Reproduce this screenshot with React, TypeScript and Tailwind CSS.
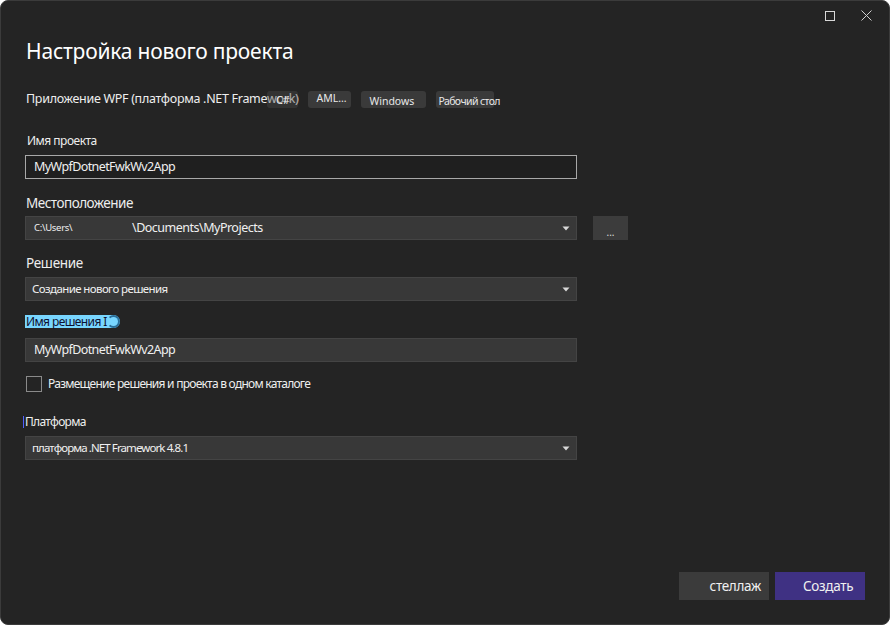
import React from "react";

const font = { fontFamily: '"Noto Sans", "Open Sans", sans-serif' };

function Chevron() {
  return (
    <svg width="8" height="5" viewBox="0 0 8 5" className="shrink-0">
      <path d="M0.5 0.5 H7.5 L4 4.5 Z" fill="#d8d8d8" />
    </svg>
  );
}

function Combo({ children }: { children: React.ReactNode }) {
  return (
    <div className="flex items-center justify-between w-[552px] h-[24px] bg-[#383838] border border-[#444444] pl-[6px] pr-[6px]">
      <div className="flex items-center text-[12px] text-[#f0f0f0]">{children}</div>
      <Chevron />
    </div>
  );
}

export default function App() {
  return (
    <div className="w-[890px] h-[625px] bg-white">
      <div
        className="relative w-[890px] h-[625px] rounded-[8px] bg-[#242424] border border-[#3b3b3b] text-[#f2f2f2] flex flex-col pl-[24px]"
        style={font}
      >
        {/* window controls */}
        <div className="absolute top-[9px] right-[17px] flex items-center gap-[26px]">
          <div className="w-[10px] h-[10px] border border-[#d8d8d8]" />
          <svg width="11" height="11" viewBox="0 0 11 11">
            <path d="M0.5 0.5 L10.5 10.5 M10.5 0.5 L0.5 10.5" stroke="#d0d0d0" strokeWidth="1" />
          </svg>
        </div>

        <h1 className="mt-[35px] ml-[1px] text-[21px] leading-[30px] text-white tracking-[-0.2px]">
          Настройка нового проекта
        </h1>

        <div className="mt-[23px] flex items-center h-[20px]">
          <span className="ml-[1px] text-[12.5px] text-[#eeeeee] tracking-[-0.3px] whitespace-nowrap">
            Приложение WPF (платформа .NET Framework)
          </span>
          <div className="flex items-center ml-[-31px] gap-[10px]">
            <span className="h-[17px] w-[31px] rounded-[3px] bg-[#4a4a4a]/40 text-[11px] leading-[17px] text-center text-[#e8e8e8]">C#</span>
            <span className="h-[17px] w-[43px] rounded-[3px] bg-[#3a3a3a] text-[10.5px] leading-[14px] pl-[8px] text-[#e8e8e8]">AML...</span>
            <span className="h-[17px] w-[65px] rounded-[3px] bg-[#3a3a3a] text-[10.5px] leading-[21px] pl-[8px] text-[#e8e8e8]">Windows</span>
            <span className="h-[17px] w-[58px] rounded-[3px] bg-[#3a3a3a] text-[10.5px] leading-[21px] pl-[2px] text-[#e8e8e8] whitespace-nowrap tracking-[-0.6px]">Рабочий стол</span>
          </div>
        </div>

        <div className="mt-[23px] ml-[2px] text-[12px] leading-[18px] text-[#eeeeee] tracking-[-0.5px]">Имя проекта</div>
        <div className="mt-[5px] w-[552px] h-[24px] bg-[#1f1f1f] border border-[#a8a8a8] flex items-center pl-[8px] text-[12.5px] tracking-[-0.6px] text-[#f0f0f0]">
          MyWpfDotnetFwkWv2App
        </div>

        <div className="mt-[14px] ml-[1px] text-[13.5px] leading-[20px] text-[#eeeeee] tracking-[-0.5px]">Местоположение</div>
        <div className="mt-[3px] flex items-center gap-[16px]">
          <Combo>
            <span className="text-[9.5px] w-[98px] ml-[2px] tracking-[-0.3px]">C:\Users\</span>
            <span className="text-[12.5px] tracking-[-0.5px]">\Documents\MyProjects</span>
          </Combo>
          <div className="w-[35px] h-[24px] bg-[#3c3c3c] flex items-end justify-center pb-[2px] text-[10px] leading-[12px] text-[#dddddd]">...</div>
        </div>

        <div className="mt-[13px] ml-[1px] text-[13.5px] leading-[20px] text-[#eeeeee] tracking-[-0.3px]">Решение</div>
        <div className="mt-[4px]">
          <Combo>
            <span className="text-[11.5px] tracking-[-0.6px]">Создание нового решения</span>
          </Combo>
        </div>

        <div className="mt-[14px] flex items-center">
          <div className="h-[13px] w-[95px] rounded-r-full bg-[#78d6ff] flex items-center pl-[1px] text-[12px] leading-[13px] text-[#101030] tracking-[-0.6px] relative">
            Имя решения I
            <div className="absolute right-[0px] top-0 w-[13px] h-[13px] rounded-full border-[2px] border-[#2a6f9a] border-l-transparent" />
          </div>
        </div>
        <div className="mt-[10px] w-[552px] h-[24px] bg-[#383838] border border-[#444444] flex items-center pl-[8px] text-[12.5px] tracking-[-0.6px] text-[#f0f0f0]">
          MyWpfDotnetFwkWv2App
        </div>

        <div className="mt-[13px] flex items-center gap-[6px] ml-[1px]">
          <div className="w-[16px] h-[16px] border border-[#8a8a8a] bg-[#242424]" />
          <span className="text-[12px] text-[#eeeeee] tracking-[-0.75px]">Размещение решения и проекта в одном каталоге</span>
        </div>

        <div className="mt-[20px] flex items-center h-[18px] ml-[-2px]">
          <span className="w-[1px] h-[12px] bg-[#5060ff] mr-[1px]" />
          <span className="text-[12px] text-[#eeeeee] tracking-[-0.7px]">Платформа</span>
        </div>
        <div className="mt-[5px]">
          <Combo>
            <span className="text-[11.5px] tracking-[-0.9px]">платформа .NET Framework 4.8.1</span>
          </Combo>
        </div>

        <div className="flex-1" />
        <div className="flex justify-end gap-[6px] pr-[24px] mb-[24px]">
          <div className="w-[90px] h-[28px] bg-[#3b3b3b] flex items-center justify-end pr-[8px] text-[13.5px] tracking-[-0.3px] text-[#f0f0f0]">стеллаж</div>
          <div className="w-[90px] h-[28px] bg-[#3f3183] flex items-center pl-[28px] text-[13.5px] tracking-[-0.3px] text-[#f0f0f0]">Создать</div>
        </div>
      </div>
    </div>
  );
}
